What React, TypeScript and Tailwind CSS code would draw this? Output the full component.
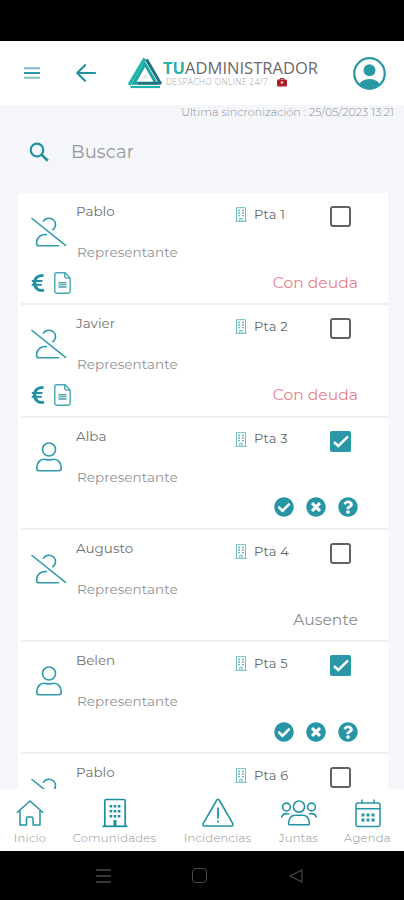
import React from 'react';
import { FaCheckCircle, FaTimesCircle, FaQuestionCircle, FaEuroSign } from 'react-icons/fa';

interface Vecino {
  id: number;
  nombre: string;
  puerta: string;
  presente: boolean;
  deuda?: boolean;
}

const VECINOS: Vecino[] = [
  { id: 1, nombre: 'Pablo', puerta: 'Pta 1', presente: false, deuda: true },
  { id: 2, nombre: 'Javier', puerta: 'Pta 2', presente: false, deuda: true },
  { id: 3, nombre: 'Alba', puerta: 'Pta 3', presente: true },
  { id: 4, nombre: 'Augusto', puerta: 'Pta 4', presente: false },
  { id: 5, nombre: 'Belen', puerta: 'Pta 5', presente: true },
  { id: 6, nombre: 'Pablo', puerta: 'Pta 6', presente: false },
];

const LogoIcon = () => (
  <svg width="34" height="31" viewBox="0 0 34 31" fill="none" className="shrink-0">
    <path d="M16.8 .5L1.2 26.8" stroke="#1fb5aa" strokeWidth="3.4" />
    <path d="M2.5 29H32" stroke="#1fb5aa" strokeWidth="2.2" />
    <path d="M17 6L6 25.3H28Z" stroke="#19a79f" strokeWidth="3" />
    <path d="M18.6 1.4L32.6 25.8" stroke="#227080" strokeWidth="3" />
    <path d="M10 25.2H33.4" stroke="#227080" strokeWidth="2.6" />
    <path d="M17 16L20 20.5H14Z" fill="#dfe3e5" />
  </svg>
);

const BriefcaseIcon = () => (
  <svg width="10" height="9" viewBox="0 0 10 9">
    <path d="M3.2 2V.6h3.6V2" fill="none" stroke="#a61f2b" />
    <rect y="1.6" width="10" height="7" rx="1" fill="#b3202c" />
    <path d="M0 4.6h10" stroke="#7b1620" strokeWidth=".7" />
    <rect x="3.8" y="3.6" width="2.4" height="1.8" fill="#fff" />
  </svg>
);

const AvatarIcon = () => (
  <svg width="33" height="33" viewBox="0 0 32 32">
    <defs>
      <clipPath id="avatar">
        <circle cx="16" cy="16" r="15" />
      </clipPath>
    </defs>
    <circle cx="16" cy="12.8" r="5.8" fill="#2b99a5" />
    <ellipse cx="16" cy="28.5" rx="10.6" ry="7.2" fill="#2b99a5" clipPath="url(#avatar)" />
    <circle cx="16" cy="16" r="14.8" fill="none" stroke="#2b99a5" strokeWidth="2.2" />
  </svg>
);

const SearchIcon = () => (
  <svg width="20" height="20" viewBox="0 0 20 20" fill="none" stroke="#2292a1">
    <circle cx="8" cy="8" r="6.3" strokeWidth="2.2" />
    <path d="M12.6 12.6L18.8 18.8" strokeWidth="2.7" />
  </svg>
);

const PersonIcon = () => (
  <svg width="26" height="30" viewBox="0 0 26 30" fill="none" stroke="#309aa8" strokeWidth="1.6">
    <circle cx="13" cy="7.5" r="6.5" />
    <path d="M3.4 28.7C1.6 28.7.8 27.8.8 26.2C.8 20.5 4 17.3 8 17.3C10 17.3 11 18 13 18S16 17.3 18 17.3C22 17.3 25.2 20.5 25.2 26.2C25.2 27.8 24.4 28.7 22.6 28.7Z" />
  </svg>
);

const PersonOffIcon = () => (
  <svg width="36" height="30" viewBox="0 0 36 30" fill="none" stroke="#309aa8" strokeWidth="1.6" strokeLinecap="round">
    <path d="M1 1.5L34.5 28.3" />
    <path d="M12.4 4.2C13.6 2.2 15.6 1.2 17.9 1.2C21.6 1.2 24.5 4 24.5 7.6C24.5 9.8 23.5 11.6 21.8 12.8" />
    <path d="M15.5 17.6C9.5 17 5.6 20.6 5.6 26.2C5.6 28 6.4 28.8 8 28.8H27.5" />
  </svg>
);

const DocumentIcon = () => (
  <svg width="17" height="22" viewBox="0 0 17 22" fill="none" stroke="#4ba4b0" strokeWidth="1.4">
    <path d="M2.5.8H11L16.2 6V19.5C16.2 20.5 15.5 21.2 14.5 21.2H2.5C1.5 21.2.8 20.5.8 19.5V2.5C.8 1.5 1.5.8 2.5.8Z" />
    <path d="M10.8 1V4.8C10.8 5.6 11.2 6.1 12 6.1H16" />
    <path d="M4.5 10.8H12.5M4.5 12.9H12.5M4.5 15H12.5" />
  </svg>
);

const PortalIcon = () => (
  <svg width="12" height="15" viewBox="0 0 12 15" fill="none" stroke="#6fb9bd" strokeWidth="1">
    <path d="M1.5 14V.7H10.5V14M.3 14.3H11.7M4.8 14V11.3H7.2V14" />
    <path d="M3 3.5H5M7 3.5H9M3 6H5M7 6H9M3 8.7H5M7 8.7H9" strokeWidth="1.3" />
  </svg>
);

const HomeIcon = () => (
  <svg width="28" height="28" viewBox="0 0 28 28" fill="none" stroke="#2494a3" strokeWidth="1.5" strokeLinejoin="round">
    <path d="M.8 12.8L14 1L27.2 12.8" />
    <path d="M4 10.3V25H10.5V18.5C10.5 17.6 11 17 11.9 17H15.7C16.6 17 17.1 17.6 17.1 18.5V25H24V10.3" />
  </svg>
);

const ComunidadIcon = () => (
  <svg width="26" height="30" viewBox="0 0 26 30" fill="none" stroke="#1e8e9e">
    <path d="M2.8 28V3C2.8 2 3.3 1.5 4.3 1.5H21.7C22.7 1.5 23.2 2 23.2 3V28" strokeWidth="1.7" />
    <path d="M.5 28.3H25.5" strokeWidth="1.8" />
    <path d="M13 28V22" strokeWidth="3" />
    <path d="M7.6 8.2H18.6M7.6 13.2H18.6M7.6 18.2H18.6" strokeWidth="2.6" strokeDasharray="2.6 1.5" />
  </svg>
);

const AlertaIcon = () => (
  <svg width="32" height="30" viewBox="0 0 32 30" fill="none" stroke="#2494a3" strokeWidth="1.6" strokeLinejoin="round">
    <path d="M14.8 2Q16 .4 17.2 2L30.8 25.6Q31.6 27.8 29.5 28H2.5Q.4 27.8 1.2 25.6Z" />
    <path d="M16 9.5V20.5M16 22.5V24.5" strokeWidth="1.8" />
  </svg>
);

const JuntasIcon = () => (
  <svg width="36" height="28" viewBox="0 0 36 28" fill="none" stroke="#2494a3" strokeWidth="1.6" strokeLinecap="round">
    <circle cx="18" cy="6.6" r="5.6" />
    <circle cx="5.5" cy="7" r="3.9" />
    <circle cx="30.5" cy="7" r="3.9" />
    <path d="M9 24.8C7.8 24.8 7.4 24 7.6 22.8C8.2 18 10.5 15.3 14 15.3H22C25.5 15.3 27.8 18 28.4 22.8C28.6 24 28.2 24.8 27 24.8Z" />
    <path d="M.8 17C1.5 14.3 4 13.2 7.5 13.8M35.2 17C34.5 14.3 32 13.2 28.5 13.8" />
  </svg>
);

const AgendaIcon = () => (
  <svg width="26" height="29" viewBox="0 0 26 29" fill="none" stroke="#2494a3" strokeWidth="1.5">
    <rect x="1" y="4" width="24" height="23.5" rx="2" />
    <path d="M1 9.8H25M7 .5V4M19 .5V4" />
    <path d="M6.5 16H19.5M6.5 21H19.5" strokeWidth="3" strokeDasharray="3 2" />
  </svg>
);

const NAV = [
  { label: 'Inicio', icon: <HomeIcon />, width: 'w-[60px]' },
  { label: 'Comunidades', icon: <ComunidadIcon />, width: 'w-[109px]' },
  { label: 'Incidencias', icon: <AlertaIcon />, width: 'w-[97px]' },
  { label: 'Juntas', icon: <JuntasIcon />, width: 'w-[65px]' },
  { label: 'Agenda', icon: <AgendaIcon />, width: 'w-[73px]' },
];

const Casilla: React.FC<{ marcada: boolean }> = ({ marcada }) =>
  marcada ? (
    <span className="flex size-[21px] items-center justify-center rounded-[2px] bg-[#2a98a7]">
      <svg width="16" height="13" viewBox="0 0 16 13" fill="none" stroke="#fff" strokeWidth="2.4">
        <path d="M1 7L5.3 11L15 1.3" />
      </svg>
    </span>
  ) : (
    <span className="block size-[21px] rounded-[3px] border-2 border-[#626264]" />
  );

const FilaVecino: React.FC<{ vecino: Vecino }> = ({ vecino }) => (
  <li className="flex h-[112.3px] shrink-0 flex-col bg-white">
    <div className="flex h-[76px] shrink-0">
      <div className="flex w-[58px] justify-center pt-[24px] pl-[3px]">
        {vecino.presente ? <PersonIcon /> : <PersonOffIcon />}
      </div>
      <div className="w-[158px] pt-2">
        <p className="text-[13.5px] leading-5 text-[#707072]">{vecino.nombre}</p>
        <p className="mt-[21px] pl-px text-[13.5px] leading-5 tracking-[0.05px] text-[#919193]">Representante</p>
      </div>
      <div className="flex h-[43px] w-[96px] items-center gap-[7px] pl-[1px]">
        <PortalIcon />
        <span className="text-[13px] tracking-[0.2px] text-[#666668]">{vecino.puerta}</span>
      </div>
      <div className="pt-[13px]">
        <Casilla marcada={vecino.presente} />
      </div>
    </div>
    <div className="flex h-[27px] shrink-0 items-center justify-between pr-[30px] pl-[12px]">
      <div className="flex items-center gap-[8px]">
        {vecino.deuda && (
          <>
            <FaEuroSign size={20} color="#2190a0" className="w-[16px]" />
            <DocumentIcon />
          </>
        )}
      </div>
      {vecino.deuda && <span className="text-[15.5px] tracking-[0.05px] text-[#e67f8c]">Con deuda</span>}
      {vecino.presente && (
        <div className="flex gap-[12px] text-[#2895a4]">
          <FaCheckCircle size={20} />
          <FaTimesCircle size={20} />
          <FaQuestionCircle size={20} />
        </div>
      )}
      {!vecino.deuda && !vecino.presente && (
        <span className="text-[15.5px] tracking-[0.1px] text-[#8a8a8c]">Ausente</span>
      )}
    </div>
    <div className="mt-auto ml-[3px] h-[2px] bg-[#eeeeef]" />
  </li>
);

const App: React.FC = () => {
  return (
    <div className="flex h-[900px] w-[404px] flex-col overflow-hidden bg-black font-['Montserrat','Inter',sans-serif]">
      <div className="h-[41px] shrink-0" />

      {/* Cabecera */}
      <header className="flex h-[64px] shrink-0 items-center bg-white pl-6">
        <svg width="16" height="12" viewBox="0 0 16 12" strokeWidth="1.9">
          <path d="M0 1.2H16M0 10.8H16" stroke="#80bec5" />
          <path d="M0 6H16" stroke="#2694a2" />
        </svg>
        <svg width="20" height="18" viewBox="0 0 20 18" className="ml-9" fill="none" stroke="#2392a0" strokeWidth="2.1" strokeLinecap="round" strokeLinejoin="round">
          <path d="M19 9H1.5M9 1.2L1.2 9L9 16.8" />
        </svg>
        <div className="ml-8 flex items-center">
          <LogoIcon />
          <div className="ml-[1px] font-['Open_Sans'] whitespace-nowrap">
            <div className="text-[16.5px] leading-[18px] tracking-[0.02px] text-[#6a6a6c]">
              <span className="font-bold text-[#2bb0aa]">TU</span>ADMINISTRADOR
            </div>
            <div className="flex items-center gap-[9px] pl-[3px]">
              <span className="text-[8.5px] leading-[10px] font-light tracking-[0.35px] text-[#a4a4a6]">DESPACHO ONLINE 24/7</span>
              <BriefcaseIcon />
            </div>
          </div>
        </div>
        <div className="mr-[18px] ml-auto">
          <AvatarIcon />
        </div>
      </header>

      <main className="flex min-h-0 flex-1 flex-col overflow-hidden bg-[#f4f6fa]">
        <p className="h-[14px] shrink-0 pr-[10px] text-right text-[11px] leading-[14px] font-light tracking-[0.1px] whitespace-nowrap text-[#8e8e92]">
          Ultima sincronización : 25/05/2023 13:21
        </p>
        <div className="flex h-[74px] shrink-0 items-center gap-[22px] pb-[8px] pl-[29px]">
          <SearchIcon />
          <span className="text-[18px] tracking-[0.1px] text-[#98989c]">Buscar</span>
        </div>

        {/* Asistentes */}
        <ul className="mr-4 ml-[18px] flex flex-col">
          {VECINOS.map((vecino) => (
            <FilaVecino key={vecino.id} vecino={vecino} />
          ))}
        </ul>
      </main>

      <nav className="flex h-[62px] shrink-0 bg-white">
        {NAV.map((item) => (
          <div key={item.label} className={`flex shrink-0 flex-col items-center pt-[9px] ${item.width}`}>
            <span className="flex h-[30px] items-end">{item.icon}</span>
            <span className="mt-[3px] text-[11.5px] leading-[15px] font-light tracking-[0.3px] text-[#8c8c8e]">
              {item.label}
            </span>
          </div>
        ))}
      </nav>

      {/* Botones del sistema */}
      <footer className="flex h-[49px] shrink-0 items-center pl-[96px] text-[#4a4a4a]">
        <svg width="15" height="14" viewBox="0 0 15 14" stroke="currentColor" strokeWidth="1.4">
          <path d="M0 1H15M0 7H15M0 13H15" />
        </svg>
        <span className="ml-[81px] size-[15px] rounded-[4px] border border-current" />
        <svg width="14" height="14" viewBox="0 0 14 14" className="ml-[82px]" fill="none" stroke="currentColor" strokeWidth="1.2" strokeLinejoin="round">
          <path d="M13 1V13L1 7Z" />
        </svg>
      </footer>
    </div>
  );
};

export default App;
